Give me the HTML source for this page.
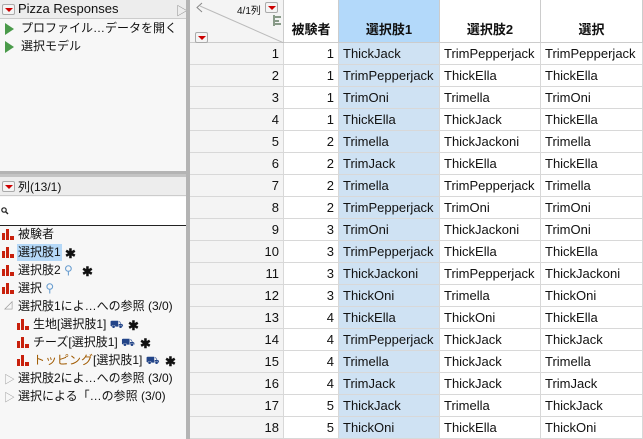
<!DOCTYPE html>
<html><head><meta charset="utf-8"><style>
*{margin:0;padding:0;box-sizing:border-box}
body{width:643px;height:439px;overflow:hidden;background:#fff;font-family:"Liberation Sans","Noto Sans CJK JP",sans-serif;font-size:13px;color:#111;position:relative}
.a{position:absolute;white-space:nowrap}
.L{font-size:12px;line-height:17px}
.dd{position:absolute;width:13px;height:11px;border:1px solid #aaa;background:#f4f4f4;border-radius:2px}
.dd:after{content:"";position:absolute;left:2px;top:3px;border-left:4px solid transparent;border-right:4px solid transparent;border-top:4px solid #c00}
.bar{position:absolute;width:12px;height:11px}
.bar i{position:absolute;bottom:0;background:#c8200c;width:3px}
.tri{position:absolute;border-top:6px solid transparent;border-bottom:6px solid transparent;border-left:9px solid #4a9a4a}
.cell{position:absolute;height:22px;line-height:22px;border-right:1px solid #d8d8d8;border-bottom:1px solid #d8d8d8;padding:0 4px;overflow:hidden}
.r{text-align:right}
.star{font-weight:bold;font-size:13px;line-height:17px}
</style></head><body>
<div class="a" style="left:0;top:0;width:187px;height:171px;background:#f7f7f7"></div>
<div class="a" style="left:0;top:0;width:187px;height:19px;background:#ededed;border-bottom:1px solid #ccc"></div>
<div class="dd" style="left:2px;top:4px"></div>
<div class="a" style="left:18px;top:1px;font-size:13px">Pizza Responses</div>
<div class="a" style="left:176px;top:2px;color:#888;font-size:12px">▷</div>
<div class="tri" style="left:5px;top:23px"></div>
<div class="a L" style="left:21px;top:20px">プロファイル…データを開く</div>
<div class="tri" style="left:5px;top:41px"></div>
<div class="a L" style="left:21px;top:38px">選択モデル</div>
<div class="a" style="left:0;top:171px;width:187px;height:6px;background:#c4c4c4;border-top:3px solid #b4b4b4"></div>
<div class="a" style="left:186px;top:0;width:4px;height:439px;background:#b4b4b4"></div>
<div class="a" style="left:0;top:177px;width:186px;height:262px;background:#f7f7f7"></div>
<div class="a" style="left:0;top:177px;width:186px;height:19px;background:#ededed;border-bottom:1px solid #ccc"></div>
<div class="dd" style="left:2px;top:181px"></div>
<div class="a L" style="left:18px;top:179px">列(13/1)</div>
<div class="a" style="left:0;top:197px;width:186px;height:29px;background:#fff;border-bottom:1px solid #222"></div>
<svg class="a" style="left:1px;top:207px" width="8" height="8"><circle cx="3" cy="3" r="2.2" fill="none" stroke="#222" stroke-width="1.2"/><line x1="4.5" y1="4.5" x2="7" y2="7" stroke="#222" stroke-width="1.4"/></svg>
<div class="bar" style="left:2px;top:229px"><i style="left:0;height:7px"></i><i style="left:4px;height:11px"></i><i style="left:8px;height:4px;width:4px"></i></div>
<div class="a L" style="left:18px;top:226px">被験者</div>
<div class="bar" style="left:2px;top:247px"><i style="left:0;height:7px"></i><i style="left:4px;height:11px"></i><i style="left:8px;height:4px;width:4px"></i></div>
<div class="a L" style="left:17px;top:244px;background:#b5d8f7;padding:0 1px">選択肢1</div><div class="a star" style="left:65px;top:245px">✱</div>
<div class="bar" style="left:2px;top:265px"><i style="left:0;height:7px"></i><i style="left:4px;height:11px"></i><i style="left:8px;height:4px;width:4px"></i></div>
<div class="a L" style="left:18px;top:262px">選択肢2 <span style="color:#6a9ed0">⚲</span></div><div class="a star" style="left:82px;top:263px">✱</div>
<div class="bar" style="left:2px;top:283px"><i style="left:0;height:7px"></i><i style="left:4px;height:11px"></i><i style="left:8px;height:4px;width:4px"></i></div>
<div class="a L" style="left:18px;top:280px">選択 <span style="color:#6a9ed0">⚲</span></div>
<div class="a" style="left:4px;top:298px;color:#999;font-size:11px">◿</div>
<div class="a L" style="left:18px;top:298px">選択肢1によ…への参照 (3/0)</div>
<div class="bar" style="left:17px;top:319px"><i style="left:0;height:7px"></i><i style="left:4px;height:11px"></i><i style="left:8px;height:4px;width:4px"></i></div>
<div class="a L" style="left:33px;top:316px">生地[選択肢1] <span style="color:#224488;font-size:11px">⛟</span></div><div class="a star" style="left:128px;top:317px">✱</div>
<div class="bar" style="left:17px;top:337px"><i style="left:0;height:7px"></i><i style="left:4px;height:11px"></i><i style="left:8px;height:4px;width:4px"></i></div>
<div class="a L" style="left:33px;top:334px">チーズ[選択肢1] <span style="color:#224488;font-size:11px">⛟</span></div><div class="a star" style="left:140px;top:335px">✱</div>
<div class="bar" style="left:17px;top:355px"><i style="left:0;height:7px"></i><i style="left:4px;height:11px"></i><i style="left:8px;height:4px;width:4px"></i></div>
<div class="a L" style="left:33px;top:352px"><span style="color:#a05a00">トッピング</span>[選択肢1] <span style="color:#224488;font-size:11px">⛟</span></div><div class="a star" style="left:165px;top:353px">✱</div>
<div class="a" style="left:4px;top:371px;color:#999;font-size:11px">▷</div>
<div class="a L" style="left:18px;top:370px">選択肢2によ…への参照 (3/0)</div>
<div class="a" style="left:4px;top:389px;color:#999;font-size:11px">▷</div>
<div class="a L" style="left:18px;top:388px">選択による「…の参照 (3/0)</div>
<div class="a" style="left:190px;top:0;width:94px;height:43px;background:#f4f4f4;border-right:1px solid #ccc;border-bottom:1px solid #ccc"></div>
<svg class="a" style="left:190px;top:0" width="94" height="43"><line x1="10" y1="6" x2="94" y2="43" stroke="#bbb"/><path d="M12 3 L7 7.5 L12 12" fill="none" stroke="#888"/><g fill="#889a88"><rect x="83" y="15" width="2" height="11"/><rect x="85" y="16" width="6" height="2"/><rect x="85" y="20" width="4" height="2"/><rect x="85" y="23" width="6" height="2"/></g></svg>
<div class="a" style="left:237px;top:2px;font-size:10px">4/1列</div>
<div class="dd" style="left:265px;top:2px"></div>
<div class="dd" style="left:195px;top:32px"></div>
<div class="cell" style="left:284px;top:0;width:55px;height:43px;line-height:60px;font-weight:bold;text-align:center;border-color:#ccc">被験者</div>
<div class="cell" style="left:339px;top:0;width:101px;height:43px;line-height:60px;font-weight:bold;text-align:center;background:#b3d9fa;border-color:#ccc">選択肢1</div>
<div class="cell" style="left:440px;top:0;width:101px;height:43px;line-height:60px;font-weight:bold;text-align:center;border-color:#ccc">選択肢2</div>
<div class="cell" style="left:541px;top:0;width:102px;height:43px;line-height:60px;font-weight:bold;text-align:center;border-color:#ccc">選択</div>
<div id="rows"></div>
<script>
var d=[[1,"ThickJack","TrimPepperjack","TrimPepperjack"],[1,"TrimPepperjack","ThickElla","ThickElla"],[1,"TrimOni","Trimella","TrimOni"],[1,"ThickElla","ThickJack","ThickElla"],[2,"Trimella","ThickJackoni","Trimella"],[2,"TrimJack","ThickElla","ThickElla"],[2,"Trimella","TrimPepperjack","Trimella"],[2,"TrimPepperjack","TrimOni","TrimOni"],[3,"TrimOni","ThickJackoni","TrimOni"],[3,"TrimPepperjack","ThickElla","ThickElla"],[3,"ThickJackoni","TrimPepperjack","ThickJackoni"],[3,"ThickOni","Trimella","ThickOni"],[4,"ThickElla","ThickOni","ThickElla"],[4,"TrimPepperjack","ThickJack","ThickJack"],[4,"Trimella","ThickJack","Trimella"],[4,"TrimJack","ThickJack","TrimJack"],[5,"ThickJack","Trimella","ThickJack"],[5,"ThickOni","ThickElla","ThickOni"]];
var h="";d.forEach(function(r,i){var y=43+i*22;
h+='<div class="cell r" style="left:190px;top:'+y+'px;width:94px;background:#f4f4f4">'+(i+1)+'</div>';
h+='<div class="cell r" style="left:284px;top:'+y+'px;width:55px">'+r[0]+'</div>';
h+='<div class="cell" style="left:339px;top:'+y+'px;width:101px;background:#cfe2f3">'+r[1]+'</div>';
h+='<div class="cell" style="left:440px;top:'+y+'px;width:101px">'+r[2]+'</div>';
h+='<div class="cell" style="left:541px;top:'+y+'px;width:102px">'+r[3]+'</div>';});
document.getElementById("rows").innerHTML=h;
</script>
</body></html>
